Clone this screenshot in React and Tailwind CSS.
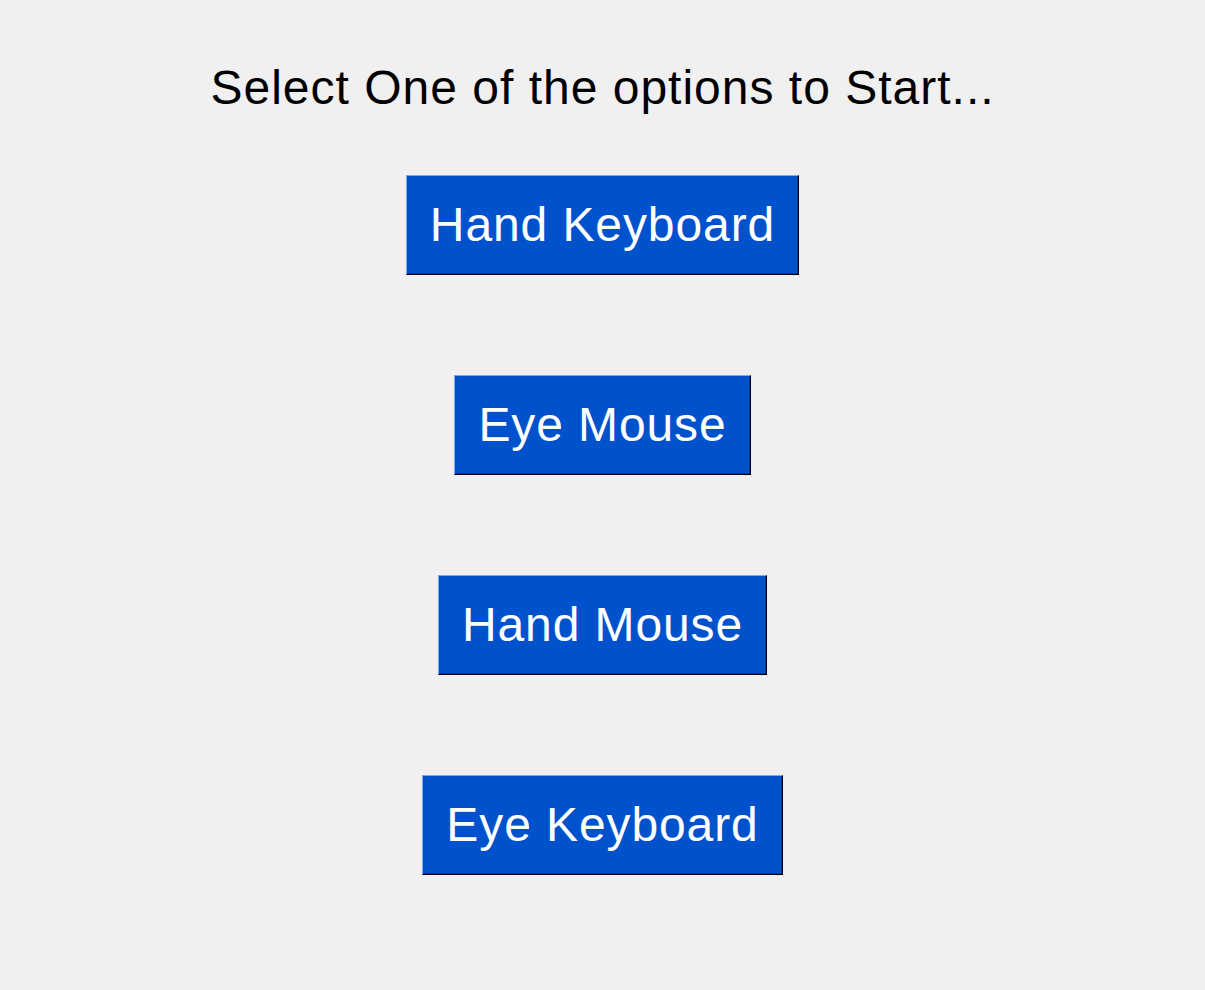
const options = ['Hand Keyboard', 'Eye Mouse', 'Hand Mouse', 'Eye Keyboard'];

export default function App() {
    return (
        <div className="min-h-screen w-full bg-[#f0f0f0] flex flex-col items-center pt-[64px] font-['Liberation_Sans',Arial,sans-serif]">
            {/* Title */}
            <h1 className="text-[48px] leading-none tracking-[1px] text-black">
                Select One of the options to Start...
            </h1>

            {/* Options */}
            <div className="flex flex-col items-center gap-[100px] mt-[63px]">
                {options.map((label) => (
                    <button
                        key={label}
                        className="h-[100px] px-[23px] pt-[25px] flex items-start bg-[#0052cc] text-white text-[48px] leading-none tracking-[0.9px] border border-t-[#7fa5e6] border-l-[#7fa5e6] border-b-black border-r-black shadow-[inset_-1px_-1px_0_#00399a]"
                    >
                        {label}
                    </button>
                ))}
            </div>
        </div>
    );
}
